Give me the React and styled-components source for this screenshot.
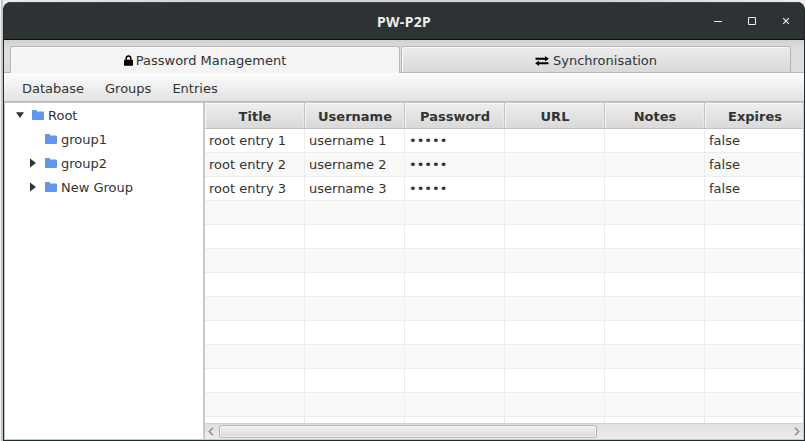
import React from "react";
import styled, { createGlobalStyle } from "styled-components";

const GlobalStyle = createGlobalStyle`
  * { box-sizing: border-box; }
  body {
    margin: 0;
    overflow: hidden;
    background: #e6e6e6;
    font-family: "DejaVu Sans", sans-serif;
    font-size: 13px;
    color: #333;
  }
`;

const Desktop = styled.div`
  width: 805px;
  height: 441px;
  padding: 2px 0 0 3px;
  background: linear-gradient(90deg, #f2f2f2 0 1px, #c6c6c6 1px 3px, transparent 3px),
    linear-gradient(90deg, #ececec, #d4d4d4 25%, #d4d4d4 75%, #ececec);
`;

const Window = styled.div`
  display: flex;
  flex-direction: column;
  width: 802px;
  height: 439px;
  border: 1px solid #23282a;
  border-top: 0;
  border-radius: 8px 8px 0 0;
  overflow: hidden;
  background: #23282a;
`;

const TitleBar = styled.header`
  display: grid;
  grid-template-columns: 1fr auto 1fr;
  align-items: center;
  flex: 0 0 38px;
  background: #2d3234;
  border-top: 1px solid #3e4446;
  border-bottom: 1px solid #0c0d0e;
`;

const Title = styled.h1`
  grid-column: 2;
  margin: 1px 0 0;
  font: bold 14px "Noto Sans", sans-serif;
  line-height: 18px;
  letter-spacing: 0.3px;
  color: #eeeeec;
`;

const Controls = styled.div`
  display: flex;
  justify-content: flex-end;
  gap: 18px;
  padding: 0 10px 0 0;
`;

const TabHeader = styled.nav`
  display: flex;
  gap: 1px;
  flex: 0 0 33px;
  padding: 6px 12px 0 6px;
  background: linear-gradient(#d2d2d2, #dedede 8px, #dcdcdc);
  box-shadow: inset 0 -1px #b5b5b5;
`;

const Tab = styled.div`
  display: flex;
  flex: 0 0 390px;
  align-items: center;
  justify-content: center;
  gap: ${(p) => (p.$active ? 3 : 4)}px;
  padding-top: ${(p) => (p.$active ? 1 : 2)}px;
  border: 1px solid #b5b5b5;
  border-bottom: ${(p) => (p.$active ? "0" : "1px solid #b5b5b5")};
  border-radius: 3px 3px 0 0;
  box-shadow: inset 1px 1px #fafafa;
  background: ${(p) => (p.$active ? "#f4f4f4" : "linear-gradient(#ececec, #d9d9d9)")};
`;

const MenuBar = styled.nav`
  display: flex;
  gap: 21px;
  flex: 0 0 29px;
  padding: 4px 18px 0;
  line-height: 24px;
  background: linear-gradient(#fcfcfc, #e3e3e3);
  border-bottom: 1px solid #b9b9b9;
`;

const MenuItem = styled.span`
  white-space: nowrap;
`;

const Content = styled.main`
  display: flex;
  flex: 0 0 338px;
  min-height: 0;
  height: 338px;
  border: 1px solid #c8c8c8;
`;

const Tree = styled.ul`
  flex: 0 0 198px;
  margin: 0;
  padding: 0;
  list-style: none;
  background: #fff;
`;

const TreeRow = styled.li`
  display: flex;
  align-items: center;
  height: 24px;
  padding-left: ${(p) => p.$depth * 13 + 10}px;
`;

const Disclosure = styled.span`
  display: flex;
  width: 17px;
`;

const TreeLabel = styled.span`
  margin-left: 4px;
`;

const TablePane = styled.section`
  display: flex;
  flex-direction: column;
  flex: 1;
  min-width: 0;
  border-left: 2px solid #c8c8c8;
`;

const HeaderRow = styled.div`
  display: grid;
  grid-template-columns: repeat(6, 100px);
  flex: 0 0 26px;
  overflow: hidden;
`;

const HeaderCell = styled.div`
  padding: 2px 0 0 1px;
  height: 26px;
  line-height: 24px;
  text-align: center;
  font-weight: bold;
  background: linear-gradient(#eeeeee, #d9d9d9);
  border-right: 1px solid #c2c2c2;
  border-bottom: 1px solid #c2c2c2;
  box-shadow: inset 1px 1px #f7f7f7, inset -1px 0 #e8e8e8;
`;

const Rows = styled.div`
  flex: 1;
  min-height: 0;
  overflow: hidden;
`;

const Row = styled.div`
  display: grid;
  grid-template-columns: repeat(6, 100px);
  height: 24px;
  background: ${(p) => (p.$striped ? "#f9f9f9" : "#fff")};
`;

const Cell = styled.div`
  padding-left: 4px;
  height: 24px;
  line-height: 23px;
  border-right: 1px solid #ededed;
  border-bottom: 1px solid #ededed;
`;

const ScrollBar = styled.div`
  display: flex;
  align-items: center;
  justify-content: space-between;
  flex: 0 0 16px;
  padding: 0 3px 0 3px;
  border-top: 1px solid #d0d0d0;
  background: linear-gradient(#e0e0e0, #ececec);
`;

const Track = styled.div`
  flex: 1;
  margin: 0 5px;
`;

const Thumb = styled.div`
  width: 378px;
  height: 13px;
  border: 1px solid #b4b4b4;
  border-radius: 3px;
  box-shadow: inset 0 0 0 1px #f4f4f4;
  background: linear-gradient(#f2f2f2, #dadada);
`;

const Icon = styled.svg`
  display: block;
  flex: none;
`;

const LockIcon = () => (
  <Icon width="9" height="11" viewBox="0 0 9 11">
    <path d="M2.2 5V3.2a2.3 2.3 0 0 1 4.6 0V5" fill="none" stroke="#000" strokeWidth="1.5" />
    <rect y="4.7" width="9" height="6" rx="0.7" />
  </Icon>
);

const ExchangeIcon = () => (
  <Icon width="14" height="10" viewBox="0 0 14 10">
    <path d="M0.5 1.8h9.5V0l3.8 2.8L10 5.6V3.8H.5zM13.5 6.2H4V4.4L.2 7.2 4 10V8.2h9.5z" />
  </Icon>
);

const FolderIcon = () => (
  <Icon width="12" height="10" viewBox="0 0 12 10">
    <path d="M0 1Q0 0 1 0h3q1 0 1 1v.5h6q1 0 1 1V9q0 1-1 1H1Q0 10 0 9z" fill="#6495ed" />
  </Icon>
);

const Arrow = ({ open }) => (
  <Icon width="10" height="10" viewBox="0 0 10 10">
    <path d={open ? "M1 2.3h8L5 8z" : "M2 .5v9L8 5z"} fill="#333" />
  </Icon>
);

const Chevron = ({ right }) => (
  <Icon width="6" height="9" viewBox="0 0 6 9">
    <path
      d={right ? "M1 .8 4.8 4.5 1 8.2" : "M5 .8 1.2 4.5 5 8.2"}
      fill="none"
      stroke="#8a8a8a"
      strokeWidth="1.4"
    />
  </Icon>
);

const WindowButton = ({ path, width = 1 }) => (
  <Icon width="16" height="16" viewBox="0 0 16 16">
    <path d={path} fill="none" stroke="#eeeeec" strokeWidth={width} />
  </Icon>
);

const groups = [
  { name: "Root", depth: 0, arrow: "open" },
  { name: "group1", depth: 1 },
  { name: "group2", depth: 1, arrow: "closed" },
  { name: "New Group", depth: 1, arrow: "closed" },
];

const columns = ["Title", "Username", "Password", "URL", "Notes", "Expires"];

const rows = Array.from({ length: 13 }, (_, i) =>
  i < 3
    ? [`root entry ${i + 1}`, `username ${i + 1}`, "•••••", "", "", "false"]
    : ["", "", "", "", "", ""]
);

export default function App() {
  return (
    <>
      <GlobalStyle />
      <Desktop>
        <Window>
          <TitleBar>
            <Title>PW-P2P</Title>
            <Controls>
              <WindowButton path="M4 8.5h8" />
              <WindowButton path="M4.5 4.5h7v7h-7z" />
              <WindowButton path="M5.2 5.2l5.6 5.6M10.8 5.2l-5.6 5.6" width={1.2} />
            </Controls>
          </TitleBar>
          <TabHeader>
            <Tab $active>
              <LockIcon />
              Password Management
            </Tab>
            <Tab>
              <ExchangeIcon />
              Synchronisation
            </Tab>
          </TabHeader>
          <MenuBar>
            <MenuItem>Database</MenuItem>
            <MenuItem>Groups</MenuItem>
            <MenuItem>Entries</MenuItem>
          </MenuBar>
          <Content>
            <Tree>
              {groups.map((g) => (
                <TreeRow key={g.name} $depth={g.depth}>
                  <Disclosure>{g.arrow && <Arrow open={g.arrow === "open"} />}</Disclosure>
                  <FolderIcon />
                  <TreeLabel>{g.name}</TreeLabel>
                </TreeRow>
              ))}
            </Tree>
            <TablePane>
              <HeaderRow>
                {columns.map((c) => (
                  <HeaderCell key={c}>{c}</HeaderCell>
                ))}
              </HeaderRow>
              <Rows>
                {rows.map((cells, i) => (
                  <Row key={i} $striped={i % 2 === 1}>
                    {cells.map((text, j) => (
                      <Cell key={j}>{text}</Cell>
                    ))}
                  </Row>
                ))}
              </Rows>
              <ScrollBar>
                <Chevron />
                <Track>
                  <Thumb />
                </Track>
                <Chevron right />
              </ScrollBar>
            </TablePane>
          </Content>
        </Window>
      </Desktop>
    </>
  );
}
